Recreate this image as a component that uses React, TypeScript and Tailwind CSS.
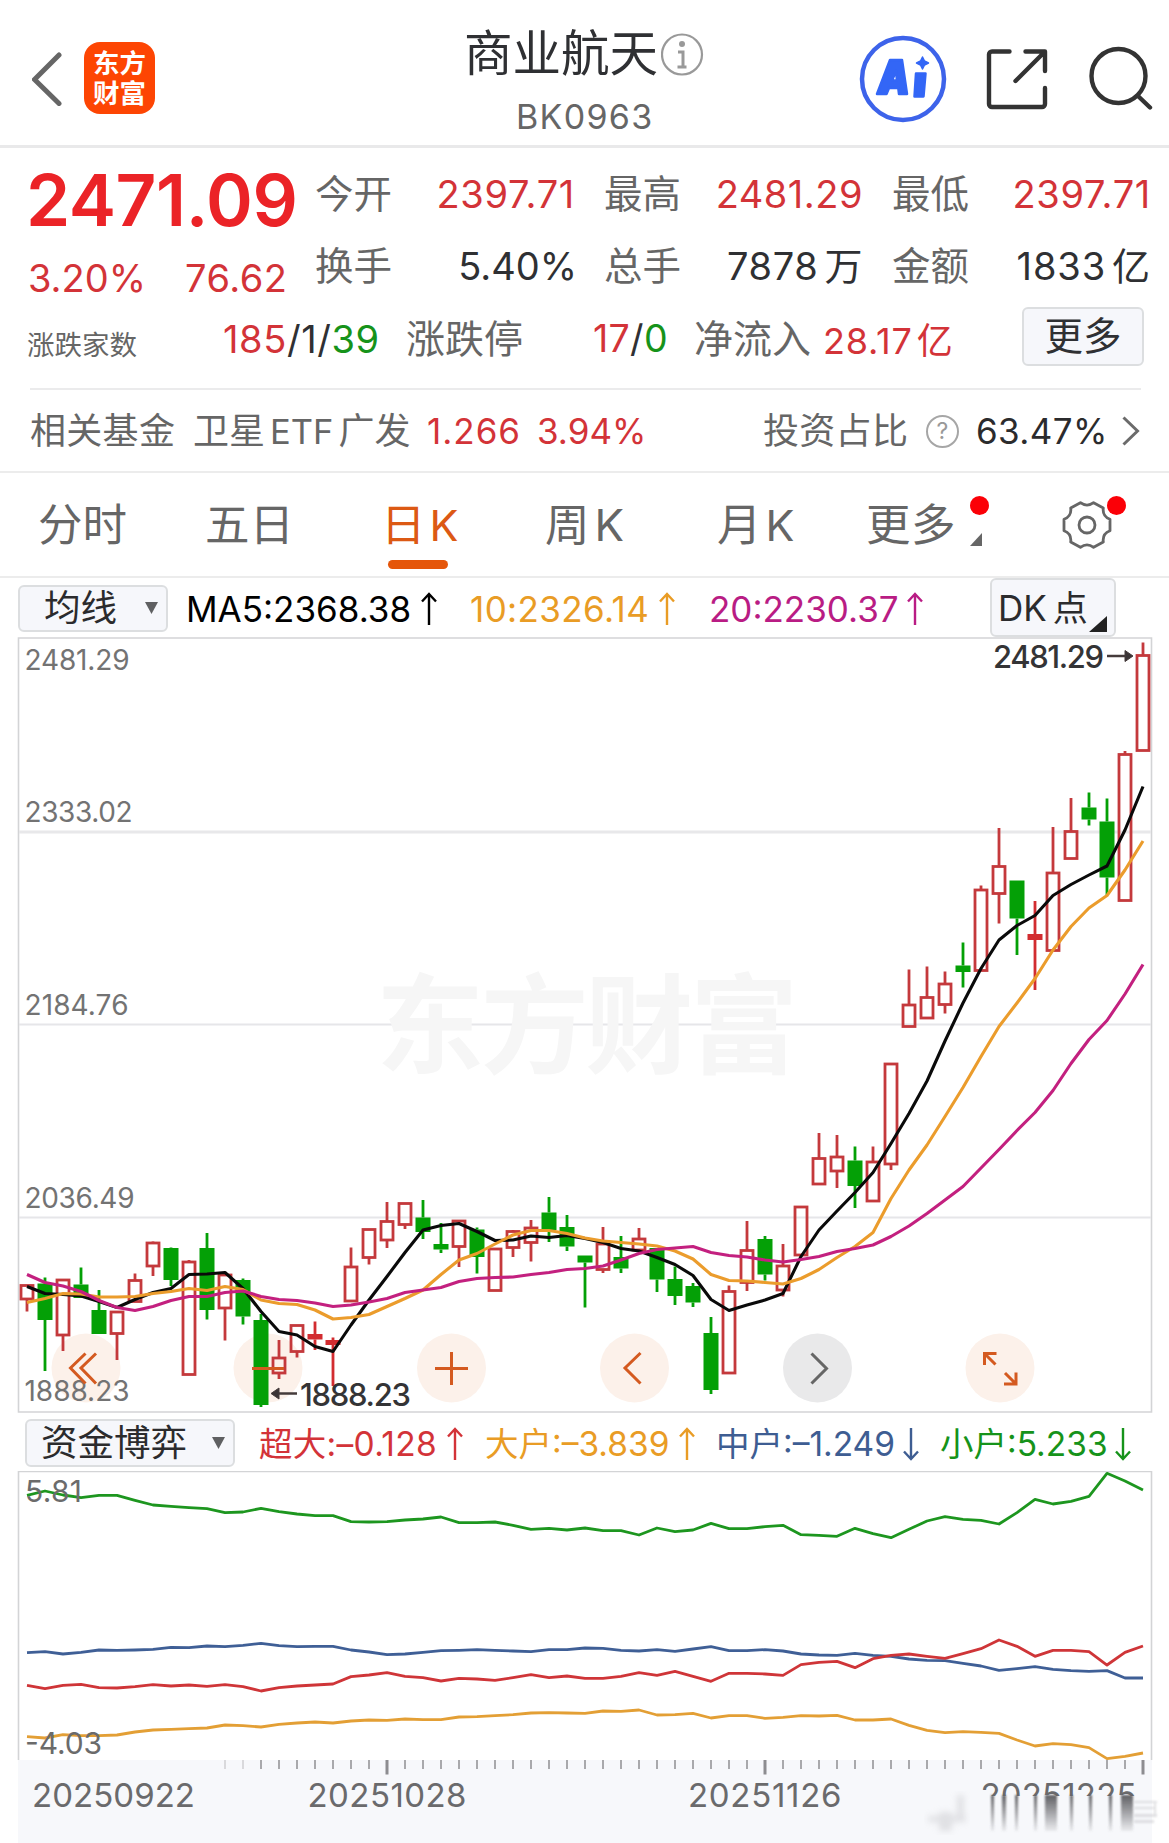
import type { ReactNode } from "react"

const STEP = 18
const FIRST_X = 27

// [type, high, bodyTop, bodyBottom, low] - r hollow red, g solid green, d red doji
type Candle = [string, number, number, number, number]

const candles: Candle[] = [
  ["r", 1285, 1285.5, 1299, 1311.5], ["g", 1277.5, 1283.5, 1320, 1371], ["r", 1280, 1280, 1335, 1351],
  ["g", 1267.5, 1284.5, 1298, 1298], ["g", 1290, 1310, 1334, 1334], ["r", 1312, 1312, 1333.5, 1360],
  ["r", 1273.5, 1280.5, 1301.5, 1301.5], ["r", 1241.5, 1243, 1266, 1276], ["g", 1247.5, 1248, 1280, 1286],
  ["r", 1260, 1262, 1374.5, 1374.5], ["g", 1233, 1248, 1310, 1319.5], ["r", 1275, 1275, 1308, 1340.5],
  ["g", 1278.5, 1280, 1316.5, 1324.5], ["g", 1314, 1320, 1405, 1407], ["r", 1340, 1358, 1373, 1379],
  ["r", 1325, 1325.5, 1351.5, 1357.5], ["d", 1321.5, 1334, 1339.5, 1350], ["d", 1337.5, 1340, 1345, 1386],
  ["r", 1247.5, 1267, 1301, 1301], ["r", 1229.5, 1229.5, 1257.5, 1264.5], ["r", 1202, 1221.5, 1240, 1248],
  ["r", 1203.5, 1203.5, 1224.5, 1229], ["g", 1200, 1217.5, 1232, 1239], ["g", 1223, 1244, 1249.5, 1253],
  ["r", 1221, 1221, 1246.5, 1267], ["g", 1227.5, 1229.5, 1257, 1273.5], ["r", 1249, 1249, 1290.5, 1290.5],
  ["r", 1230, 1231.5, 1247.5, 1257], ["r", 1220, 1228, 1242.5, 1261.5], ["g", 1197, 1212.5, 1230, 1242],
  ["g", 1215, 1227, 1246.5, 1251], ["g", 1255.5, 1255.5, 1262.5, 1307.5], ["r", 1227, 1244, 1269.5, 1273],
  ["g", 1236, 1257, 1268.5, 1273], ["r", 1228, 1239, 1250, 1250], ["g", 1248, 1248, 1279.5, 1292],
  ["g", 1266.5, 1279, 1296, 1305], ["g", 1283, 1286, 1302.5, 1307], ["g", 1317, 1333, 1390, 1394],
  ["r", 1285.5, 1291.5, 1373, 1373], ["r", 1221, 1250.5, 1282.5, 1291], ["g", 1236, 1239, 1274.5, 1280.5],
  ["r", 1244, 1266, 1290, 1296.5], ["r", 1207, 1207, 1255, 1255], ["r", 1133, 1158.5, 1184, 1184],
  ["r", 1135, 1157, 1171, 1188], ["g", 1146.5, 1160.5, 1186, 1208], ["r", 1146.5, 1162, 1201, 1201],
  ["r", 1064, 1064, 1164, 1170], ["r", 969.5, 1005, 1026.5, 1026.5], ["r", 966.5, 997.5, 1018, 1018],
  ["r", 971.5, 984, 1004.5, 1013.5], ["g", 942.5, 965.5, 972, 987.5], ["r", 885.5, 890, 970.5, 970.5],
  ["r", 828, 866.5, 893.5, 923.5], ["g", 880.5, 880.5, 918.5, 955], ["d", 901, 934, 940, 990],
  ["r", 827, 873, 950.5, 950.5], ["r", 798, 831.5, 858.5, 858.5], ["g", 792.5, 807.5, 819.5, 825.5],
  ["g", 798.5, 821.5, 877.5, 895], ["r", 751, 754.5, 900.5, 900.5], ["r", 642.5, 655.5, 750.5, 750.5],
]

const ma5 = [
  1286.5, 1293.5, 1294.5, 1296, 1301.5, 1307.5, 1299.5, 1292.5, 1288.5, 1274.5, 1274, 1272.5, 1288.5, 1311.5, 1331.5,
  1335, 1346.5, 1351.5, 1325, 1300, 1276.5, 1252.5, 1230, 1225.5, 1223.5, 1231.5, 1240.5, 1240, 1236, 1237.5, 1235.5,
  1238.5, 1242.5, 1248.5, 1251, 1257.5, 1264.5, 1275.5, 1299.5, 1310.5, 1305, 1300, 1293.5, 1256.5, 1230, 1211, 1192.5,
  1172.5, 1143.5, 1113.5, 1081, 1041, 1003, 968.5, 940, 925.5, 915.5, 895.5, 884.5, 875, 866, 830, 786.5,
]

const ma10 = [
  1302.5, 1298.5, 1293.5, 1294, 1297, 1297, 1296.5, 1293.5, 1291.5, 1288.5, 1290.5, 1286.5, 1289.5, 1300, 1303.5,
  1304.5, 1310, 1319, 1317.5, 1314.5, 1306.5, 1298.5, 1290, 1274.5, 1260, 1253.5, 1244, 1235, 1230.5, 1230.5, 1233.5,
  1238, 1241, 1242.5, 1244, 1246, 1251, 1259, 1274.5, 1280.5, 1281, 1282.5, 1284, 1278.5, 1269.5, 1257.5, 1246.5,
  1232.5, 1198.5, 1170, 1145, 1116.5, 1087.5, 1056.5, 1026.5, 1003, 978.5, 950, 926.5, 908, 895.5, 870, 841,
]

const ma20 = [
  1274.5, 1282.5, 1286, 1291.5, 1300.5, 1307.5, 1310.5, 1306.5, 1300.5, 1296.5, 1296.5, 1292.5, 1291, 1296.5, 1299.5,
  1300.5, 1303, 1306.5, 1305, 1302, 1298.5, 1292.5, 1290, 1287.5, 1281.5, 1278.5, 1277.5, 1277, 1274.5, 1272.5, 1269.5,
  1268.5, 1266, 1260, 1253.5, 1249.5, 1248, 1246.5, 1252.5, 1255.5, 1257, 1260, 1262, 1259.5, 1256.5, 1251.5, 1248.5,
  1245, 1236.5, 1226, 1213.5, 1200, 1186.5, 1168, 1149.5, 1130.5, 1112.5, 1090.5, 1063.5, 1039.5, 1020.5, 994, 964.5,
]

// fund flow series, in thirds of a pixel below y = 1400
const retail = [
  286, 273, 285, 293, 286, 286, 301, 315, 319, 323, 326, 338, 336, 325, 335, 342, 347, 347, 365, 366, 365, 360, 357,
  351, 368, 368, 366, 376, 388, 385, 390, 384, 392, 392, 405, 384, 395, 390, 370, 386, 386, 380, 376, 404, 406, 409,
  385, 401, 413, 388, 363, 350, 358, 361, 372, 338, 298, 312, 304, 289, 220, 243, 270,
]
const medium = [
  758, 755, 762, 757, 750, 751, 750, 748, 742, 743, 738, 740, 736, 730, 737, 740, 739, 739, 750, 756, 764, 762, 757,
  752, 751, 749, 751, 753, 755, 749, 749, 744, 745, 751, 753, 749, 754, 747, 740, 752, 752, 749, 753, 762, 765, 766,
  760, 766, 769, 777, 781, 782, 790, 798, 811, 806, 800, 808, 812, 814, 812, 834, 834,
]
const huge = [
  856, 866, 856, 853, 863, 864, 860, 854, 858, 855, 859, 854, 860, 873, 863, 858, 855, 852, 830, 825, 818, 829, 833,
  843, 835, 837, 841, 833, 824, 833, 828, 835, 835, 829, 818, 826, 814, 829, 844, 820, 820, 822, 826, 794, 787, 784,
  803, 776, 766, 762, 769, 775, 761, 746, 720, 739, 769, 751, 751, 755, 795, 757, 738,
]
const large = [
  1010, 1014, 1004, 1007, 1007, 1005, 996, 990, 988, 986, 984, 975, 977, 981, 973, 969, 966, 969, 963, 960, 961, 957,
  959, 959, 951, 950, 947, 944, 939, 938, 939, 940, 933, 934, 930, 945, 944, 940, 954, 947, 947, 955, 952, 947, 948,
  946, 960, 960, 957, 976, 991, 998, 995, 997, 1000, 1020, 1038, 1031, 1034, 1043, 1076, 1069, 1059,
]

const toPoints = (ys: number[]) => ys.map((y, i) => `${FIRST_X + i * STEP},${y}`).join(" ")
const flowPoints = (vs: number[]) => toPoints(vs.map((v) => 1400 + v / 3))

function Caret({ className }: { className: string }) {
  return (
    <svg viewBox="0 0 13 12" className={className}>
      <path d="M0 0h13L6.5 12z" fill="#5f6062" />
    </svg>
  )
}

function Arrow({ down = false }: { down?: boolean }) {
  return (
    <svg viewBox="0 0 16 34" className="h-[34px] w-4 shrink-0" fill="none" stroke="currentColor" strokeWidth="2.4">
      <path d={down ? "M8 1v31M1 24.500l7 7.500 7-7.500" : "M8 33V2M1 9.500L8 2l7 7.500"} />
    </svg>
  )
}

function Header() {
  return (
    <header className="flex h-[148px] border-b-[3px] border-[#e9e9ea]">
      <svg viewBox="0 0 30 54" className="ml-[32px] mt-[52px] h-[54px] w-[30px]" fill="none" stroke="#666" strokeWidth="5">
        <path d="M27 3L2.500 27.500l24.500 24" strokeLinecap="round" />
      </svg>
      <div className="ml-[22px] mt-[42px] flex h-[72px] w-[71px] flex-col items-center justify-center rounded-[16px] bg-[#fd4503] text-[26.5px] leading-[30px] font-bold text-white">
        <span>东方</span>
        <span>财富</span>
      </div>
      <div className="ml-[309px] flex w-[241px] flex-col">
        <div className="mt-[24px] flex h-[60px] items-center">
          <h1 className="w-[198px] text-[48.5px] leading-[60px] text-[#2f3033]">商业航天</h1>
          <svg viewBox="0 0 44 44" className="h-11 w-11 shrink-0" fill="none" stroke="#999" strokeWidth="2.2">
            <circle cx="21" cy="22.500" r="20" />
            <circle cx="21" cy="12" r="3" fill="#999" stroke="none" />
            <path d="M17 20h5V34.500M16.500 35h9" strokeWidth="3" />
          </svg>
        </div>
        <p className="ml-[52px] mt-[13px] text-[34px] leading-[40px] tracking-[1.3px] text-[#666]">BK0963</p>
      </div>
      <svg viewBox="0 0 88 88" className="ml-[154px] mt-[35px] h-[88px] w-[88px]">
        <circle cx="44" cy="44" r="41" fill="none" stroke="#3d63ea" strokeWidth="4.500" />
        <g fill="#3366f6" stroke="#3366f6" strokeWidth="2.500" strokeLinejoin="round">
          <path fillRule="evenodd" d="M31 25H43L48 59h-8l-.700-6h-9.300L27.500 59H18zM37 36l-4 9.500h5z" />
          <path d="M57 38.500h9.500l-2 23h-9z" />
          <path d="M63.500 22l2 4 4 2-4 2-2 4-2-4-4-2 4-2z" strokeWidth="1.500" />
        </g>
      </svg>
      <svg viewBox="0 0 62 62" className="ml-[39px] mt-[48px] h-[62px] w-[62px]" fill="none" stroke="#333" strokeWidth="4.400" strokeLinecap="round" strokeLinejoin="round">
        <path d="M23.500 3.500H6a3 3 0 0 0-3 3V56a3 3 0 0 0 3 3h50a3 3 0 0 0 3-3V40" />
        <path d="M39.500 3.500H59V23M58 4.500L29.500 33" />
      </svg>
      <svg viewBox="0 0 64 64" className="ml-[41px] mt-[46px] h-16 w-16" fill="none" stroke="#333" strokeWidth="4.400" strokeLinecap="round">
        <circle cx="29.500" cy="30" r="27" />
        <path d="M49 50l12 11.500" />
      </svg>
    </header>
  )
}

function Stat({ label, children }: { label: string; children: ReactNode }) {
  return (
    <div className="flex items-center justify-between">
      <span className="text-[38.5px] text-[#666]">{label}</span>
      {children}
    </div>
  )
}

function Quote() {
  return (
    <section className="h-[325px] border-b-2 border-[#ececec]">
      <div className="flex h-[149px] pt-[10px]">
        <div className="ml-[26px] w-[289px]">
          <p className="mt-[6px] h-[72px] text-[71px] leading-[72px] font-semibold tracking-[-0.4px] text-[#eb2327]">2471.09</p>
          <div className="mt-[20px] ml-[2px] flex text-[38px] leading-[44px] text-[#d33338]">
            <span className="w-[157px]">3.20%</span>
            <span className="tracking-[0.500px]">76.62</span>
          </div>
        </div>
        <div className="grid h-[144px] w-[837px] grid-cols-[260px_259px_259px] gap-x-[29px] leading-[72px]">
          <Stat label="今开">
            <span className="text-[38px] tracking-[0.700px] text-[#d33338]">2397.71</span>
          </Stat>
          <Stat label="最高">
            <span className="text-[38px] tracking-[0.500px] text-[#d33338]">2481.29</span>
          </Stat>
          <Stat label="最低">
            <span className="text-[38px] tracking-[0.700px] text-[#d33338]">2397.71</span>
          </Stat>
          <Stat label="换手">
            <span className="mr-[-2px] text-[38px] text-[#2f3033]">5.40%</span>
          </Stat>
          <Stat label="总手">
            <span className="text-[38px] tracking-[0.600px] text-[#2f3033]">7878<span className="ml-[6px]">万</span></span>
          </Stat>
          <Stat label="金额">
            <span className="text-[38px] tracking-[0.900px] text-[#2f3033]">1833<span className="ml-[6px]">亿</span></span>
          </Stat>
        </div>
      </div>
      <div className="flex h-[91px] items-center pb-[9px] text-[38px] text-[#2f3033]">
        <span className="ml-[27px] mt-[16px] w-[196px] text-[27.5px] text-[#666]">涨跌家数</span>
        <span className="mt-[2px] w-[183px] text-[38px] tracking-[0.600px]">
          <span className="text-[#d33338]">185</span>/1/<span className="text-[#16931a]">39</span>
        </span>
        <span className="mt-[2px] w-[187px] text-[39px] text-[#666]">涨跌停</span>
        <span className="mt-[2px] w-[101px] text-[37.5px] tracking-[0.300px]">
          <span className="text-[#d33338]">17</span>/<span className="text-[#16931a]">0</span>
        </span>
        <span className="mt-[2px] w-[129px] text-[39px] text-[#666]">净流入</span>
        <span className="mt-[5px] w-[199px] text-[36px] tracking-[0.800px] text-[#d33338]">28.17<span className="ml-[4px]">亿</span></span>
        <button className="mt-[-4px] h-[59px] w-[122px] rounded-md border-2 border-[#dcdee0] bg-[#f6f7fb] text-[38.500px] leading-[48px]">更多</button>
      </div>
      <div className="ml-[30px] mr-[28px] h-[2px] bg-[#ebebec]" />
      <div className="flex h-[82px] items-center text-[36px] text-[#666]">
        <span className="ml-[30px] w-[163px] tracking-[0.300px]">相关基金</span>
        <span className="w-[234px]">卫星<span className="mx-[5px] text-[34.5px]">ETF</span>广发</span>
        <span className="w-[110px] text-[35px] tracking-[1px] text-[#d33338]">1.266</span>
        <span className="w-[226px] text-[35px] text-[#d33338]">3.94%</span>
        <span className="w-[163px] tracking-[0.300px]">投资占比</span>
        <span className="flex h-[33px] w-[33px] items-center justify-center rounded-full border-2 border-[#a6a6a6] text-[23px] text-[#999]">?</span>
        <span className="ml-[17px] w-[146px] text-[35px] tracking-[0.400px] text-[#2b2b2d]">63.47%</span>
        <svg viewBox="0 0 18 30" className="h-[30px] w-[18px]" fill="none" stroke="#6b6b6b" strokeWidth="3">
          <path d="M1.500 1.500L15.500 15l-14 13.500" />
        </svg>
      </div>
    </section>
  )
}

function Tabs() {
  return (
    <nav className="flex h-[105px] items-center border-b-2 border-[#ececec] text-[44.5px] leading-[60px] text-[#666]">
      <span className="ml-[38px] w-[167px]">分时</span>
      <span className="w-[176px]">五日</span>
      <span className="relative flex w-[164px] gap-[4px] text-[#dc5914]">
        日<span className="text-[43px]">K</span>
        <i className="absolute left-[7px] top-[65px] h-[9px] w-[60px] rounded-full bg-[#e5560a]" />
      </span>
      <span className="flex w-[172px] gap-[5px]">周<span className="text-[44px]">K</span></span>
      <span className="flex w-[149px] gap-[4px]">月<span className="text-[43px]">K</span></span>
      <span className="relative w-[196px] tracking-[0.500px]">
        更多
        <i className="absolute left-[104px] top-[1px] h-[19px] w-[19px] rounded-full bg-[#fb0007]" />
        <svg viewBox="0 0 12 13" className="absolute left-[104px] top-[38px] h-[13px] w-3">
          <path d="M12 0v13H0z" fill="#666" />
        </svg>
      </span>
      <span className="relative">
        <svg viewBox="0 0 50 50" className="h-[50px] w-[50px]" fill="none" stroke="#666" strokeWidth="2.800" strokeLinejoin="round">
          <path d="M48 19.200V30.800Q40.200 33.750 41.300 42L31.600 47.300Q25 42.500 18.400 47.300L8.700 42Q9.800 33.750 2 30.800V19.200Q9.800 16.250 8.700 8L18.400 2.700Q25 7.500 31.600 2.700L41.300 8Q40.200 16.250 48 19.200Z" />
          <circle cx="25" cy="25" r="8" />
        </svg>
        <i className="absolute left-[45px] top-[-4px] h-[19px] w-[19px] rounded-full bg-[#fb0007]" />
      </span>
    </nav>
  )
}

function MaBar() {
  return (
    <div className="flex h-[59px] items-center text-[35px]">
      <button className="ml-[18px] mt-px flex h-[47px] w-[150px] items-center rounded-md border-2 border-[#dcdee0] bg-[#f6f7fb] text-[36.500px] leading-[40px] text-[#2b2b2d]">
        <span className="ml-[24px] w-[101px] text-left">均线</span>
        <Caret className="h-3 w-[13px]" />
      </button>
      <span className="ml-[18px] flex w-[284px] items-center justify-between pt-[3px] pr-[33px] text-black">MA5:2368.38<Arrow /></span>
      <span className="flex w-[239px] items-center justify-between pt-[3px] pr-[34px] tracking-[0.400px] text-[#e99c25]">10:2326.14<Arrow /></span>
      <span className="flex w-[281px] items-center justify-between pt-[3px] pr-[67px] text-[#b91c84]">20:2230.37<Arrow /></span>
      <button className="relative h-[59px] w-[126px] rounded-md border-2 border-[#dcdee0] bg-[#f6f7fb] pt-[2px] pl-[6px] text-left text-[35px] text-[#2b2b2d]">
        DK<span className="ml-[6px]">点</span>
        <svg viewBox="0 0 18 16" className="absolute right-[7px] bottom-[3px] h-4 w-[18px]">
          <path d="M18 0v16H0z" fill="#222" />
        </svg>
      </button>
    </div>
  )
}

function CandleShape({ candle, x }: { candle: Candle; x: number }) {
  const [type, high, top, bottom, low] = candle
  const color = type === "g" ? "#04a006" : type === "d" ? "#d22c30" : "#c4393c"
  return (
    <g stroke={color} strokeWidth="2.800" fill="none">
      <path d={`M${x} ${high}V${top}M${x} ${bottom}V${low}`} />
      {type === "r" ? (
        <rect x={x - 6} y={top} width="12" height={bottom - top} />
      ) : (
        <rect x={x - 7.5} y={top} width="15" height={bottom - top} fill={color} stroke="none" />
      )}
    </g>
  )
}

const priceLabels = [
  { y: 669.5, text: "2481.29", w: 105 },
  { y: 821.5, text: "2333.02", w: 108 },
  { y: 1014.5, text: "2184.76", w: 104 },
  { y: 1208, text: "2036.49", w: 110 },
  { y: 1401, text: "1888.23", w: 105 },
]

function KLineChart() {
  return (
    <svg viewBox="0 637 1169 776" className="block h-[776px] w-full">
      <g fill="none" stroke="#d3d4d6" strokeWidth="1.600">
        <path d="M18.500 1412V638H1151.500V1412Z" />
        <path d="M19 832H1151" stroke="#e8e8ea" strokeWidth="3" />
        <path d="M19 1024.500H1151M19 1217.500H1151" stroke="#e6e6e9" strokeWidth="2" />
      </g>
      <text x="376" y="1065" fontSize="108" fontWeight="700" fill="#f6f6f6" textLength="422">东方财富</text>

      {/* chart controls sit under the candles */}
      {[86, 268, 451.5, 634.5, 1000].map((cx) => (
        <circle key={cx} cx={cx} cy="1368" r="34.500" fill="#fcf1ea" />
      ))}
      <circle cx="817.500" cy="1368" r="34.500" fill="#e9e9ea" />

      <g fontSize="28" fill="#737373">
        {priceLabels.map((l) => (
          <text key={l.text} x="24.500" y={l.y} textLength={l.w}>{l.text}</text>
        ))}
      </g>

      {candles.map((c, i) => (
        <CandleShape key={i} candle={c} x={FIRST_X + i * STEP} />
      ))}

      <g fill="none" strokeWidth="3.100" strokeLinejoin="round">
        <polyline points={toPoints(ma5)} stroke="#0a0a0a" />
        <polyline points={toPoints(ma10)} stroke="#eb9c2c" />
        <polyline points={toPoints(ma20)} stroke="#c3207f" />
      </g>

      <g fill="none" stroke="#d45a20" strokeWidth="3">
        <path d="M85.500 1353.500L70.500 1368l15 15.500M96 1353.500L81 1368l15 15.500" />
        <path d="M252 1368.500h32" />
        <path d="M435 1368.500h33M451.500 1352v33" />
        <path d="M640.500 1353L625 1368l15.500 15.500" />
        <path d="M984.500 1365V1353.500h12M984.500 1353.500l11 11M1004 1384h12v-11.500M1016 1384l-11-11" />
      </g>
      <path d="M811.500 1353.500l15 15-15 15" fill="none" stroke="#666" strokeWidth="3" />

      <g fontSize="31" fontWeight="500" fill="#343436">
        <text x="993" y="667.500" textLength="111">2481.29</text>
        <text x="300" y="1405.500" textLength="111">1888.23</text>
      </g>
      <g stroke="#453b3b" fill="#3a3436" strokeWidth="2.500">
        <path d="M1107 656h20" />
        <path d="M1125 650.500l8 5.500-8 5.500z" strokeWidth="1" />
        <path d="M297 1393.500h-20" />
        <path d="M279 1388l-8 5.500 8 5.500z" strokeWidth="1" />
      </g>
    </svg>
  )
}

function FlowBar() {
  return (
    <div className="flex h-[58px] items-center text-[33.500px]">
      <button className="ml-[25px] mt-[2px] flex h-[48px] w-[210px] items-center rounded-md border-2 border-[#dcdee0] bg-[#f6f7fb] text-[36.500px] leading-[40px] text-[#2b2b2d]">
        <span className="ml-[14px] w-[171px] text-left">资金博弈</span>
        <Caret className="h-3 w-[13px]" />
      </button>
      <span className="ml-[24px] flex w-[204px] items-center justify-between pt-[4px] tracking-[0.300px] text-[#d33338]">超大:–0.128<Arrow /></span>
      <span className="ml-[22px] flex w-[210px] items-center justify-between pt-[4px] text-[#e99c25]">大户:–3.839<Arrow /></span>
      <span className="ml-[21px] flex w-[203px] items-center justify-between pt-[4px] text-[#3e5d92]">中户:–1.249<Arrow down /></span>
      <span className="ml-[21px] flex w-[191px] items-center justify-between pt-[4px] text-[#16931a]">小户:5.233<Arrow down /></span>
    </div>
  )
}

// x and width of every smeared stem under the last date
const drips = [[991, 3], [1002, 4], [1015, 3], [1034, 3], [1045, 12], [1070, 3], [1089, 3], [1109, 3], [1121, 12]]

function FlowChart() {
  return (
    <svg viewBox="0 1471 1169 372" className="block h-[372px] w-full">
      <rect x="18" y="1760" width="1134" height="83" fill="#f7f8fb" />
      <path d="M18.500 1760V1471.500H1151.500V1760" fill="none" stroke="#d3d4d6" strokeWidth="1.600" />
      <g fill="none" strokeWidth="2.800" strokeLinejoin="round">
        <polyline points={flowPoints(retail)} stroke="#1d961f" />
        <polyline points={flowPoints(medium)} stroke="#3f5f96" />
        <polyline points={flowPoints(huge)} stroke="#cf3538" />
        <polyline points={flowPoints(large)} stroke="#e39f35" />
      </g>
      <g fontSize="30" fill="#6b6b6b">
        <text x="25" y="1501.500" textLength="57">5.81</text>
        <text x="25" y="1753.500" textLength="77">-4.03</text>
      </g>

      {candles.slice(11).map((_, k) => {
        const i = k + 11
        const major = i === 20 || i === 41 || i === 62
        const x = FIRST_X + i * STEP
        return (
          <path
            key={i}
            d={`M${x} 1760V${major ? 1774.5 : 1769}`}
            stroke={i < 13 ? "#d9d9dc" : major ? "#8d8d90" : "#a9a9ac"}
            strokeWidth={major ? 3 : 2}
          />
        )
      })}

      <g fontSize="33" fill="#6a6a6c">
        <text x="32" y="1807" textLength="163">20250922</text>
        <text x="307.500" y="1807" textLength="159">20251028</text>
        <text x="688" y="1807" textLength="153.500">20251126</text>
        <text x="980.500" y="1807" textLength="156">20251225</text>
      </g>

      {/* smeared strip over the last date */}
      <defs>
        <linearGradient id="drip" x1="0" y1="0" x2="0" y2="1">
          <stop offset="0" stopColor="#606064" />
          <stop offset="1" stopColor="#606064" stopOpacity="0.080" />
        </linearGradient>
        <filter id="soft">
          <feGaussianBlur stdDeviation="1" />
        </filter>
        <filter id="softer">
          <feGaussianBlur stdDeviation="3" />
        </filter>
      </defs>
      <rect x="978" y="1796" width="173" height="35" fill="#f7f8fb" />
      <g filter="url(#soft)" fill="url(#drip)">
        {drips.map(([x, w]) => (
          <rect key={x} x={x} y="1795" width={w} height="36" />
        ))}
      </g>
      <g fill="#c9c9cd">
        <g filter="url(#softer)" opacity="0.500">
          <rect x="928" y="1816" width="38" height="6" />
          <rect x="939" y="1812" width="13" height="19" />
          <rect x="957" y="1795" width="7" height="24" />
        </g>
        <g filter="url(#soft)" opacity="0.550">
          <rect x="1134" y="1801" width="23" height="2" />
          <rect x="1134" y="1807" width="20" height="2" />
          <rect x="1134" y="1814" width="23" height="3" />
          <rect x="1134" y="1820" width="20" height="3" />
          <rect x="1154" y="1801" width="2" height="14" />
        </g>
      </g>
    </svg>
  )
}

export default function App() {
  return (
    <main className="h-[1843px] w-[1169px] overflow-hidden bg-white font-['Inter','Noto_Sans_CJK_SC',sans-serif] whitespace-nowrap">
      <Header />
      <Quote />
      <Tabs />
      <MaBar />
      <KLineChart />
      <FlowBar />
      <FlowChart />
    </main>
  )
}
